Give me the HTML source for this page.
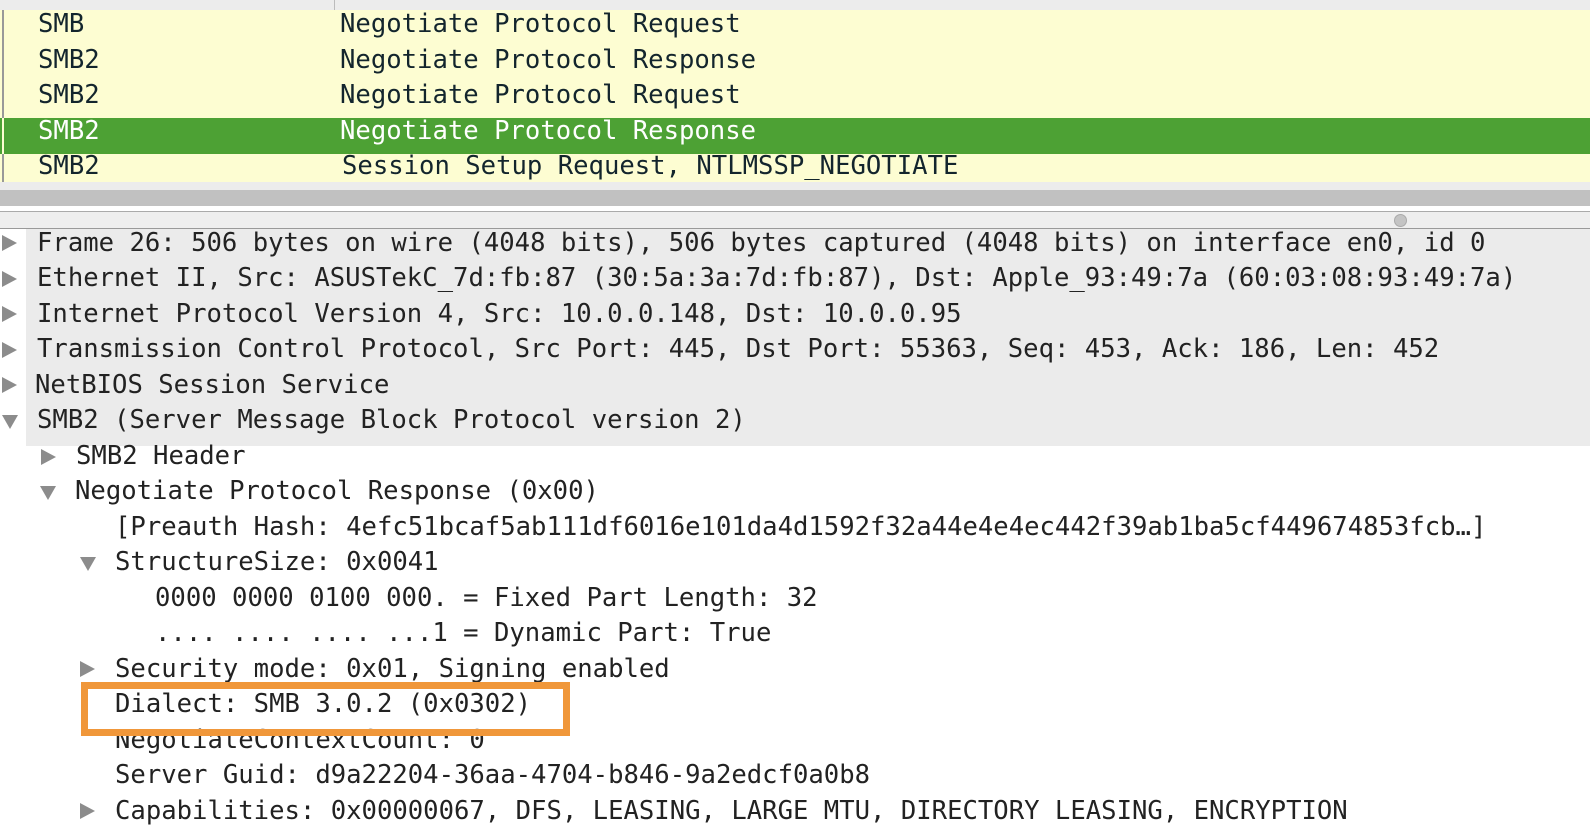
<!DOCTYPE html>
<html><head><meta charset="utf-8"><style>
*{margin:0;padding:0;box-sizing:border-box}
body{width:1590px;height:822px;overflow:hidden;background:#fff;position:relative;font-family:"DejaVu Sans Mono","Liberation Mono",monospace;font-size:25.6px}
.a{position:absolute;white-space:pre;line-height:35.5px;height:35.5px}
.t{color:#13252d}
.d{color:#222}
.tr{position:absolute;width:0;height:0;border-top:8px solid transparent;border-bottom:8px solid transparent;border-left:15px solid #8c8c8c}
.td{position:absolute;width:0;height:0;border-left:8px solid transparent;border-right:8px solid transparent;border-top:14px solid #8c8c8c}
</style></head><body>
<div style="position:absolute;left:0;top:0;width:1590px;height:10px;background:#ececec"></div>
<div style="position:absolute;left:334px;top:0;width:1px;height:10px;background:#bbb"></div>
<div style="position:absolute;left:0;top:10px;width:1590px;height:172px;background:#fdfdd2"></div>
<div style="position:absolute;left:0;top:118px;width:1590px;height:36px;background:#4da134"></div>
<div style="position:absolute;left:2px;top:10px;width:2px;height:172px;background:#999"></div>
<div style="position:absolute;left:2px;top:118px;width:2px;height:36px;background:#fdfdd2"></div>
<div style="position:absolute;left:0;top:182px;width:1590px;height:8px;background:#ececec"></div>
<div style="position:absolute;left:0;top:190px;width:1590px;height:16px;background:#c1c1c1"></div>
<div style="position:absolute;left:0;top:211px;width:1590px;height:18px;background:#eeeeee;border-top:1px solid #aaa;border-bottom:1px solid #999"></div>
<div style="position:absolute;left:1394px;top:214px;width:13px;height:13px;border-radius:50%;background:#c4c4c4;border:1px solid #aaa"></div>

<div class="a t" style="left:38px;top:7px">SMB</div><div class="a t" style="left:340px;top:7px">Negotiate Protocol Request</div>
<div class="a t" style="left:38px;top:42.5px">SMB2</div><div class="a t" style="left:340px;top:42.5px">Negotiate Protocol Response</div>
<div class="a t" style="left:38px;top:78px">SMB2</div><div class="a t" style="left:340px;top:78px">Negotiate Protocol Request</div>
<div class="a" style="left:38px;top:113.5px;color:#fff">SMB2</div><div class="a" style="left:340px;top:113.5px;color:#fff">Negotiate Protocol Response</div>
<div class="a t" style="left:38px;top:149px">SMB2</div><div class="a t" style="left:342px;top:149px">Session Setup Request, NTLMSSP_NEGOTIATE</div>

<div style="position:absolute;left:26px;top:229px;width:1564px;height:217px;background:#ebebeb"></div>

<div class="tr" style="left:2px;top:235px"></div><div class="a d" style="left:37px;top:225.5px">Frame 26: 506 bytes on wire (4048 bits), 506 bytes captured (4048 bits) on interface en0, id 0</div>
<div class="tr" style="left:2px;top:271px"></div><div class="a d" style="left:37px;top:261px">Ethernet II, Src: ASUSTekC_7d:fb:87 (30:5a:3a:7d:fb:87), Dst: Apple_93:49:7a (60:03:08:93:49:7a)</div>
<div class="tr" style="left:2px;top:306px"></div><div class="a d" style="left:37px;top:296.5px">Internet Protocol Version 4, Src: 10.0.0.148, Dst: 10.0.0.95</div>
<div class="tr" style="left:2px;top:342px"></div><div class="a d" style="left:37px;top:332px">Transmission Control Protocol, Src Port: 445, Dst Port: 55363, Seq: 453, Ack: 186, Len: 452</div>
<div class="tr" style="left:2px;top:377px"></div><div class="a d" style="left:35px;top:367.5px">NetBIOS Session Service</div>
<div class="td" style="left:2px;top:415px"></div><div class="a d" style="left:37px;top:403px">SMB2 (Server Message Block Protocol version 2)</div>
<div class="tr" style="left:41px;top:449px"></div><div class="a d" style="left:76px;top:438.5px">SMB2 Header</div>
<div class="td" style="left:40px;top:486px"></div><div class="a d" style="left:75px;top:474px">Negotiate Protocol Response (0x00)</div>
<div class="a d" style="left:115px;top:509.5px">[Preauth Hash: 4efc51bcaf5ab111df6016e101da4d1592f32a44e4e4ec442f39ab1ba5cf449674853fcb…]</div>
<div class="td" style="left:80px;top:557px"></div><div class="a d" style="left:115px;top:545px">StructureSize: 0x0041</div>
<div class="a d" style="left:155px;top:580.5px">0000 0000 0100 000. = Fixed Part Length: 32</div>
<div class="a d" style="left:155px;top:616px">.... .... .... ...1 = Dynamic Part: True</div>
<div class="tr" style="left:80px;top:661px"></div><div class="a d" style="left:115px;top:651.5px">Security mode: 0x01, Signing enabled</div>
<div class="a d" style="left:115px;top:687px">Dialect: SMB 3.0.2 (0x0302)</div>
<div class="a d" style="left:115px;top:722.5px">NegotiateContextCount: 0</div>
<div class="a d" style="left:115px;top:758px">Server Guid: d9a22204-36aa-4704-b846-9a2edcf0a0b8</div>
<div class="tr" style="left:80px;top:803px"></div><div class="a d" style="left:115px;top:793.5px">Capabilities: 0x00000067, DFS, LEASING, LARGE MTU, DIRECTORY LEASING, ENCRYPTION</div>

<div style="position:absolute;left:81px;top:682px;width:489px;height:54px;border:7px solid #f0973a"></div>
</body></html>
